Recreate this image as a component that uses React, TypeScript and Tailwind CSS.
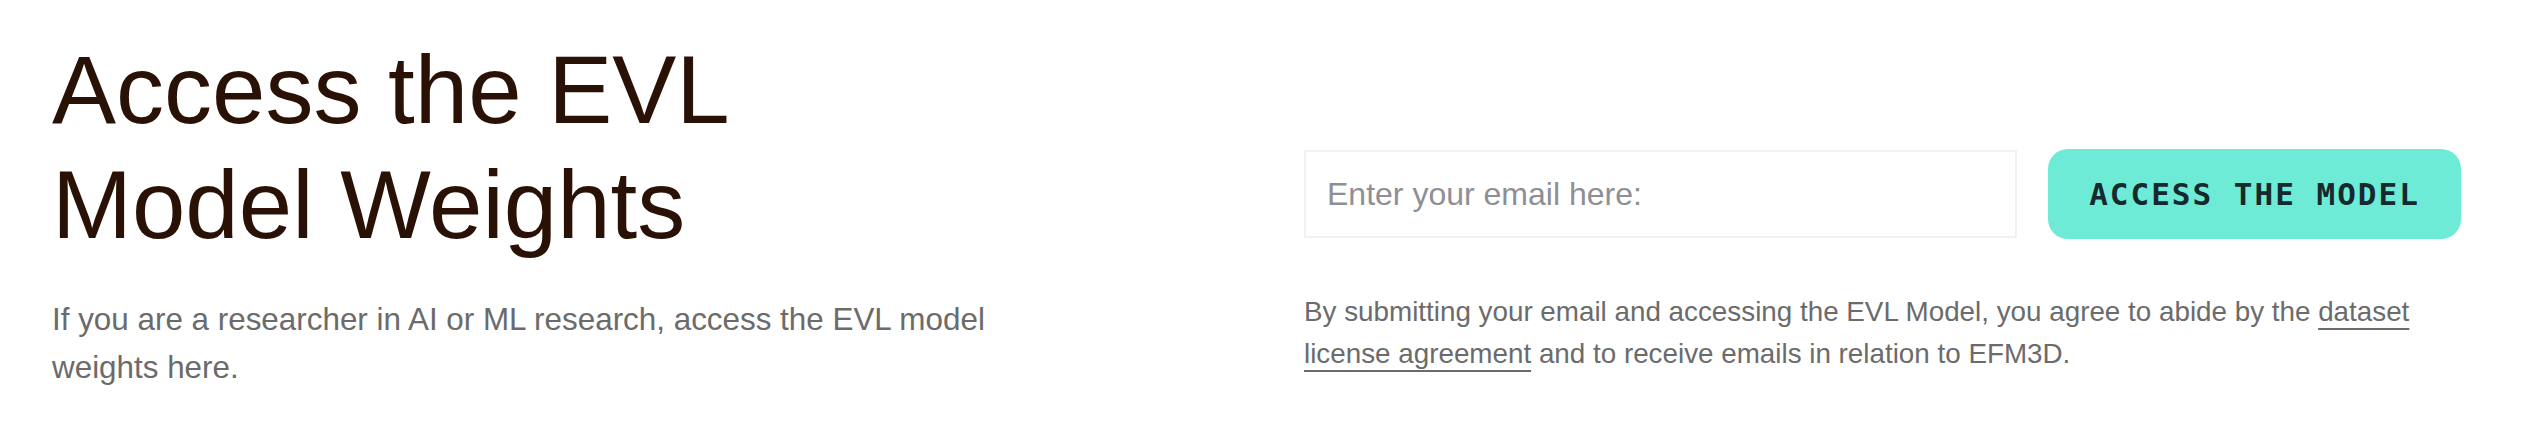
import React from 'react';

function App() {
  return (
    <div className="min-h-screen bg-white font-['Liberation_Sans',Arial,sans-serif]">
      <div className="flex justify-between pl-[52px] pr-[63px] pt-[32px]">
        {/* Left column */}
        <div className="w-[1000px]">
          <h1 className="text-[96px] leading-[1.2] font-normal text-[#2a1105]">
            Access the EVL
            <br />
            Model Weights
          </h1>
          <p className="mt-[34px] max-w-[960px] text-[31.4px] leading-[48px] text-[#6b6b6b]">
            If you are a researcher in AI or ML research, access the EVL model weights here.
          </p>
        </div>

        {/* Right column */}
        <div className="w-[1157px] pt-[117px]">
          <form className="flex items-center gap-[31px]" onSubmit={(e) => e.preventDefault()}>
            <input
              type="email"
              placeholder="Enter your email here:"
              className="h-[88px] w-[713px] border-2 border-[#f2f1ec] bg-white px-[21px] text-[32px] text-[#2a1105] outline-none placeholder:text-[#8e8f96]"
            />
            <button
              type="submit"
              className="h-[90px] flex-1 rounded-[20px] bg-[#6eebd6] font-['DejaVu_Sans_Mono',monospace] text-[31px] font-bold tracking-[2px] text-[#16292d]"
            >
              ACCESS THE MODEL
            </button>
          </form>
          <p className="mt-[52px] text-[27.8px] leading-[42px] text-[#6b6b6b]">
            By submitting your email and accessing the EVL Model, you agree to abide by the{' '}
            <a href="#" className="underline decoration-2 underline-offset-[7px]">
              dataset license agreement
            </a>{' '}
            and to receive emails in relation to EFM3D.
          </p>
        </div>
      </div>
    </div>
  );
}

export default App;
